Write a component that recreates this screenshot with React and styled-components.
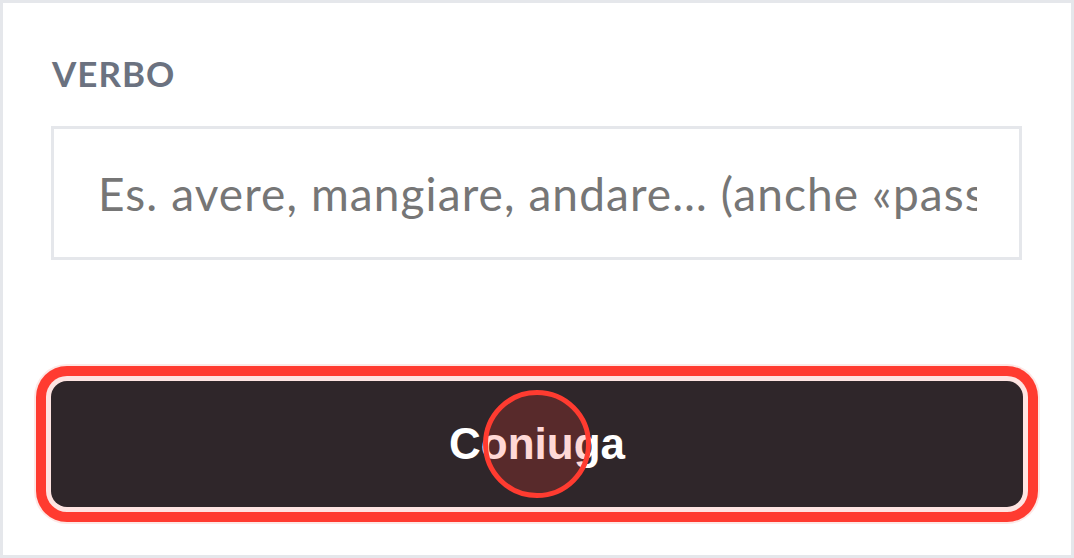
import React from "react";
import styled, { createGlobalStyle } from "styled-components";

const Global = createGlobalStyle`
  html, body { margin: 0; padding: 0; background: #ffffff; }
  * { box-sizing: border-box; }
`;

const Card = styled.div`
  width: 1074px;
  height: 558px;
  border: 3px solid #e5e7eb;
  background: #ffffff;
  padding: 48px;
  display: flex;
  flex-direction: column;
  font-family: "Lato", "Noto Sans", sans-serif;
`;

const Label = styled.label`
  display: block;
  color: #6b7280;
  font-size: 35px;
  font-weight: 700;
  letter-spacing: 1px;
  line-height: 42px;
  margin: 1px 0 0 1px;
`;

const Input = styled.input`
  display: block;
  width: 971px;
  height: 134px;
  margin-top: 32px;
  border: 3px solid #e5e7eb;
  border-radius: 0;
  padding: 0 42px 0 44px;
  font-family: "Lato", "Noto Sans", sans-serif;
  font-size: 46px;
  letter-spacing: 1.1px;
  color: #374151;
  background: #ffffff;
  outline: none;
  &::placeholder {
    color: #767676;
    opacity: 1;
  }
`;

const Button = styled.button`
  position: relative;
  margin-top: auto;
  width: 972px;
  height: 126px;
  border: none;
  border-radius: 16px;
  background: #2f262a;
  color: #ffffff;
  font-family: "Liberation Sans", Arial, sans-serif;
  font-weight: 700;
  font-size: 44px;
  cursor: pointer;
  box-shadow:
    0 0 0 5px #fee4e2,
    0 0 0 15px #ff3b30,
    0 0 0 17px #fde8e6;
`;

const ClickMarker = styled.span`
  position: absolute;
  left: 50%;
  top: 50%;
  width: 108px;
  height: 108px;
  transform: translate(-50%, -50%);
  border-radius: 50%;
  border: 5px solid #ff3b30;
  background: rgba(255, 59, 48, 0.2);
  pointer-events: none;
`;

export default function App() {
  return (
    <>
      <Global />
      <Card>
        <Label htmlFor="verbo">VERBO</Label>
        <Input
          id="verbo"
          type="text"
          placeholder="Es. avere, mangiare, andare… (anche «passato prossimo di fare»)"
        />
        <Button type="button">
          Coniuga
          <ClickMarker />
        </Button>
      </Card>
    </>
  );
}
